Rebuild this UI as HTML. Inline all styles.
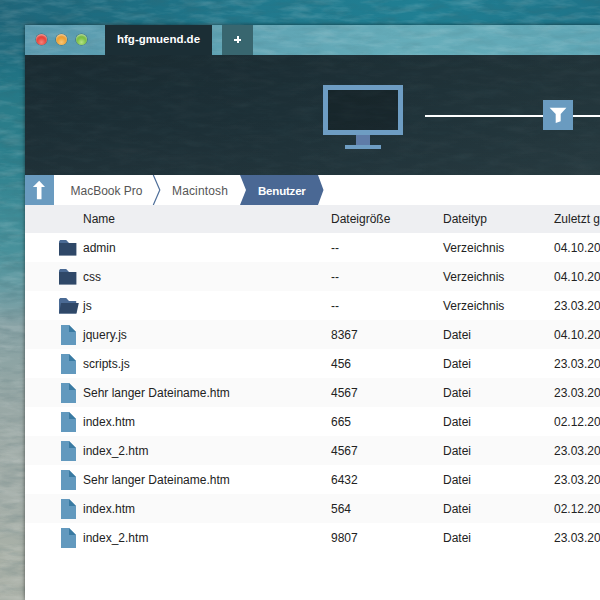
<!DOCTYPE html>
<html>
<head>
<meta charset="utf-8">
<style>
*{margin:0;padding:0;box-sizing:border-box}
html,body{width:600px;height:600px;overflow:hidden}
body{font-family:"Liberation Sans",sans-serif;font-size:12px;color:#222;position:relative;
background:linear-gradient(to bottom,#20687c 0px,#1e6b7e 50px,#227585 80px,#2a7c89 110px,#2d808d 160px,#3a8995 200px,#48919b 250px,#6c9da4 295px,#89a3a6 325px,#8da4a4 360px,#98a8a6 400px,#9faba7 450px,#a4aea9 500px,#a8b0a7 550px,#acb2a9 600px);}
#topstrip{position:absolute;left:0;top:0;width:600px;height:25px;background:linear-gradient(to right,#1f667a 0,#1d6c80 100px,#21798d 260px,#207f93 420px,#1f7489 600px)}
#win{position:absolute;left:25px;top:25px;width:575px;height:575px;box-shadow:0 0 4px rgba(0,0,0,.55)}
#title{position:absolute;left:0;top:0;width:575px;height:30px;background:linear-gradient(to right,#5a9bb0 0,#5fa3b3 200px,#66adba 400px,#5fa6b5 575px)}
.tl{position:absolute;top:8.8px;width:11px;height:11px;border-radius:50%;box-shadow:0 0 0 .6px rgba(0,0,0,.3),inset 0 1.5px 1.5px rgba(255,255,255,.45)}
#tab1{position:absolute;left:80px;top:0;width:107px;height:30px;background:#1b2e35;color:#fff;font-weight:bold;font-size:11.5px;line-height:28px;padding-left:12px;white-space:nowrap}
#tab2{position:absolute;left:197px;top:0;width:31px;height:30px;background:#38666f}
#tab2:before{content:"";position:absolute;left:12px;top:13.5px;width:7px;height:2px;background:#fff}
#tab2:after{content:"";position:absolute;left:14.5px;top:11px;width:2px;height:7px;background:#fff}
#head{position:absolute;left:0;top:30px;width:575px;height:120px;background:linear-gradient(to bottom,rgba(0,0,0,.06) 0,rgba(0,0,0,0) 50%,rgba(255,255,255,.02) 100%),linear-gradient(to right,#1b2d34 0,#1d3037 45%,#23363c 100%)}
#mon{position:absolute;left:298px;top:30px;width:80px;height:50px;border:5px solid #6e9dc3;background:rgba(0,0,0,.22)}
#neck{position:absolute;left:331px;top:80px;width:14px;height:10px;background:#5f7ca8}
#base{position:absolute;left:320px;top:90px;width:36px;height:4px;background:#6e9dc3}
#line{position:absolute;left:400px;top:60px;width:175px;height:2px;background:#fff}
#filt{position:absolute;left:518px;top:45px;width:30px;height:30px;background:#6a9bc0}
#crumb{position:absolute;left:0;top:150px;width:575px;height:30px;background:#fff}
#up{position:absolute;left:0;top:0;width:29px;height:30px;background:#6a9bc0}
.c{position:absolute;top:0;line-height:32px;color:#555;white-space:nowrap}
#thead{position:absolute;left:0;top:180px;width:575px;height:28px;background:#eeeff2}
.row{position:absolute;left:0;width:575px;height:29px;line-height:31px;white-space:nowrap}
.row.alt{background:#fafafa}
.row span,#thead span{position:absolute;top:0}
#thead span{line-height:28px;white-space:nowrap}
.n{left:58px}.s{left:306px}.t{left:418px}.d{left:529px}
.ico{position:absolute;left:34px;top:7px}
#body{position:absolute;left:0;top:208px;width:575px;height:367px;background:#fff}
</style>
</head>
<body>
<div id="topstrip"></div>
<svg width="0" height="0" style="position:absolute"><defs>
<filter id="nw" x="0" y="0" width="100%" height="100%"><feTurbulence type="fractalNoise" baseFrequency="0.035 0.14" numOctaves="4" seed="7"/><feColorMatrix type="matrix" values="0 0 0 0 1  0 0 0 0 1  0 0 0 0 1  1.6 0 0 0 -0.7"/></filter>
<filter id="nd" x="0" y="0" width="100%" height="100%"><feTurbulence type="fractalNoise" baseFrequency="0.04 0.15" numOctaves="4" seed="21"/><feColorMatrix type="matrix" values="0 0 0 0 0.05  0 0 0 0 0.12  0 0 0 0 0.14  1.6 0 0 0 -0.7"/></filter>
</defs></svg>
<svg id="texbg" width="600" height="600" style="position:absolute;left:0;top:0"><rect width="600" height="600" filter="url(#nw)" opacity=".22"/><rect width="600" height="600" filter="url(#nd)" opacity=".28"/></svg>

<div id="win">
 <div id="title">
  <svg width="575" height="30" style="position:absolute;left:0;top:0"><rect width="575" height="30" filter="url(#nw)" opacity=".2"/><rect width="575" height="30" filter="url(#nd)" opacity=".18"/></svg>
  <div class="tl" style="left:11px;background:radial-gradient(circle at 50% 75%,#f4837a 0,#e8453c 45%,#d9352e 100%)"></div>
  <div class="tl" style="left:31px;background:radial-gradient(circle at 50% 75%,#f9c777 0,#efa235 45%,#de8d25 100%)"></div>
  <div class="tl" style="left:51px;background:radial-gradient(circle at 50% 75%,#b4e387 0,#7cc045 45%,#64a835 100%)"></div>
  <div id="tab1">hfg-gmuend.de</div>
  <div id="tab2"></div>
 </div>
 <div id="head">
  <svg width="575" height="120" style="position:absolute;left:0;top:0"><rect width="575" height="120" filter="url(#nw)" opacity=".035"/><rect width="575" height="120" filter="url(#nd)" opacity=".12"/></svg>
  <div id="mon"></div><div id="neck"></div><div id="base"></div>
  <div id="line"></div>
  <div id="filt"><svg width="30" height="30" viewBox="0 0 30 30"><path d="M6.6 7.7H23.4L17.7 14V21.3L12.7 23V14Z" fill="#fff"/></svg></div>
 </div>
 <div id="crumb">
  <div id="up"><svg width="29" height="30" viewBox="0 0 29 30"><path d="M14.2 5.8L20 12H16.5V24.2H11.9V12H7.9Z" fill="#fff"/></svg></div>
  <div class="c" style="left:45.5px">MacBook Pro</div>
  <svg style="position:absolute;left:126px;top:0" width="12" height="30" viewBox="0 0 12 30"><path d="M2.3 0L8.8 15L2.3 30" fill="none" stroke="#4f6f9a" stroke-width="1.2"/></svg>
  <div class="c" style="left:147px;letter-spacing:.15px">Macintosh</div>
  <svg style="position:absolute;left:215px;top:0" width="84" height="30" viewBox="0 0 84 30"><path d="M0 0H78L83.5 15L78 30H0L6 15Z" fill="#4a6894"/></svg>
  <div class="c" style="left:233px;color:#fff;font-weight:bold;font-size:11.5px;letter-spacing:-.2px">Benutzer</div>
 </div>
 <div id="thead"><span class="n">Name</span><span class="s">Dateigröße</span><span class="t">Dateityp</span><span class="d">Zuletzt geändert</span></div>
 <div id="body">
 <div class="row" style="top:0px"><svg class="ico" style="left:34px;top:7px" width="18" height="16" viewBox="0 0 18 16"><path d="M0 3V1.2L1.2 0H7.2L10 3Z" fill="#4a6a94"/><rect x="0" y="3" width="17.4" height="12.6" fill="#2f4868"/></svg><span class="n">admin</span><span class="s">--</span><span class="t">Verzeichnis</span><span class="d">04.10.2013</span></div>
 <div class="row alt" style="top:29px"><svg class="ico" style="left:34px;top:7px" width="18" height="16" viewBox="0 0 18 16"><path d="M0 3V1.2L1.2 0H7.2L10 3Z" fill="#4a6a94"/><rect x="0" y="3" width="17.4" height="12.6" fill="#2f4868"/></svg><span class="n">css</span><span class="s">--</span><span class="t">Verzeichnis</span><span class="d">04.10.2013</span></div>
 <div class="row" style="top:58px"><svg class="ico" style="left:34px;top:7px" width="20" height="16" viewBox="0 0 20 16"><path d="M0 15.6V1.2L1.2 0H7.2L10 3H17.2V15.6Z" fill="#4a6a94"/><path d="M2 5H19.8L17.5 15.6H0Z" fill="#2f4868"/></svg><span class="n">js</span><span class="s">--</span><span class="t">Verzeichnis</span><span class="d">23.03.2013</span></div>
 <div class="row alt" style="top:87px"><svg class="ico" style="left:36px;top:5px" width="15" height="20" viewBox="0 0 15 20"><path d="M0 0H8L15 7V20H0Z" fill="#6299be"/><path d="M8 0L15 7H8Z" fill="#397aa2"/></svg><span class="n">jquery.js</span><span class="s">8367</span><span class="t">Datei</span><span class="d">04.10.2013</span></div>
 <div class="row" style="top:116px"><svg class="ico" style="left:36px;top:5px" width="15" height="20" viewBox="0 0 15 20"><path d="M0 0H8L15 7V20H0Z" fill="#6299be"/><path d="M8 0L15 7H8Z" fill="#397aa2"/></svg><span class="n">scripts.js</span><span class="s">456</span><span class="t">Datei</span><span class="d">23.03.2013</span></div>
 <div class="row alt" style="top:145px"><svg class="ico" style="left:36px;top:5px" width="15" height="20" viewBox="0 0 15 20"><path d="M0 0H8L15 7V20H0Z" fill="#6299be"/><path d="M8 0L15 7H8Z" fill="#397aa2"/></svg><span class="n">Sehr langer Dateiname.htm</span><span class="s">4567</span><span class="t">Datei</span><span class="d">23.03.2013</span></div>
 <div class="row" style="top:174px"><svg class="ico" style="left:36px;top:5px" width="15" height="20" viewBox="0 0 15 20"><path d="M0 0H8L15 7V20H0Z" fill="#6299be"/><path d="M8 0L15 7H8Z" fill="#397aa2"/></svg><span class="n">index.htm</span><span class="s">665</span><span class="t">Datei</span><span class="d">02.12.2013</span></div>
 <div class="row alt" style="top:203px"><svg class="ico" style="left:36px;top:5px" width="15" height="20" viewBox="0 0 15 20"><path d="M0 0H8L15 7V20H0Z" fill="#6299be"/><path d="M8 0L15 7H8Z" fill="#397aa2"/></svg><span class="n">index_2.htm</span><span class="s">4567</span><span class="t">Datei</span><span class="d">23.03.2013</span></div>
 <div class="row" style="top:232px"><svg class="ico" style="left:36px;top:5px" width="15" height="20" viewBox="0 0 15 20"><path d="M0 0H8L15 7V20H0Z" fill="#6299be"/><path d="M8 0L15 7H8Z" fill="#397aa2"/></svg><span class="n">Sehr langer Dateiname.htm</span><span class="s">6432</span><span class="t">Datei</span><span class="d">23.03.2013</span></div>
 <div class="row alt" style="top:261px"><svg class="ico" style="left:36px;top:5px" width="15" height="20" viewBox="0 0 15 20"><path d="M0 0H8L15 7V20H0Z" fill="#6299be"/><path d="M8 0L15 7H8Z" fill="#397aa2"/></svg><span class="n">index.htm</span><span class="s">564</span><span class="t">Datei</span><span class="d">02.12.2013</span></div>
 <div class="row" style="top:290px"><svg class="ico" style="left:36px;top:5px" width="15" height="20" viewBox="0 0 15 20"><path d="M0 0H8L15 7V20H0Z" fill="#6299be"/><path d="M8 0L15 7H8Z" fill="#397aa2"/></svg><span class="n">index_2.htm</span><span class="s">9807</span><span class="t">Datei</span><span class="d">23.03.2013</span></div>
 </div>
</div>
</body>
</html>
